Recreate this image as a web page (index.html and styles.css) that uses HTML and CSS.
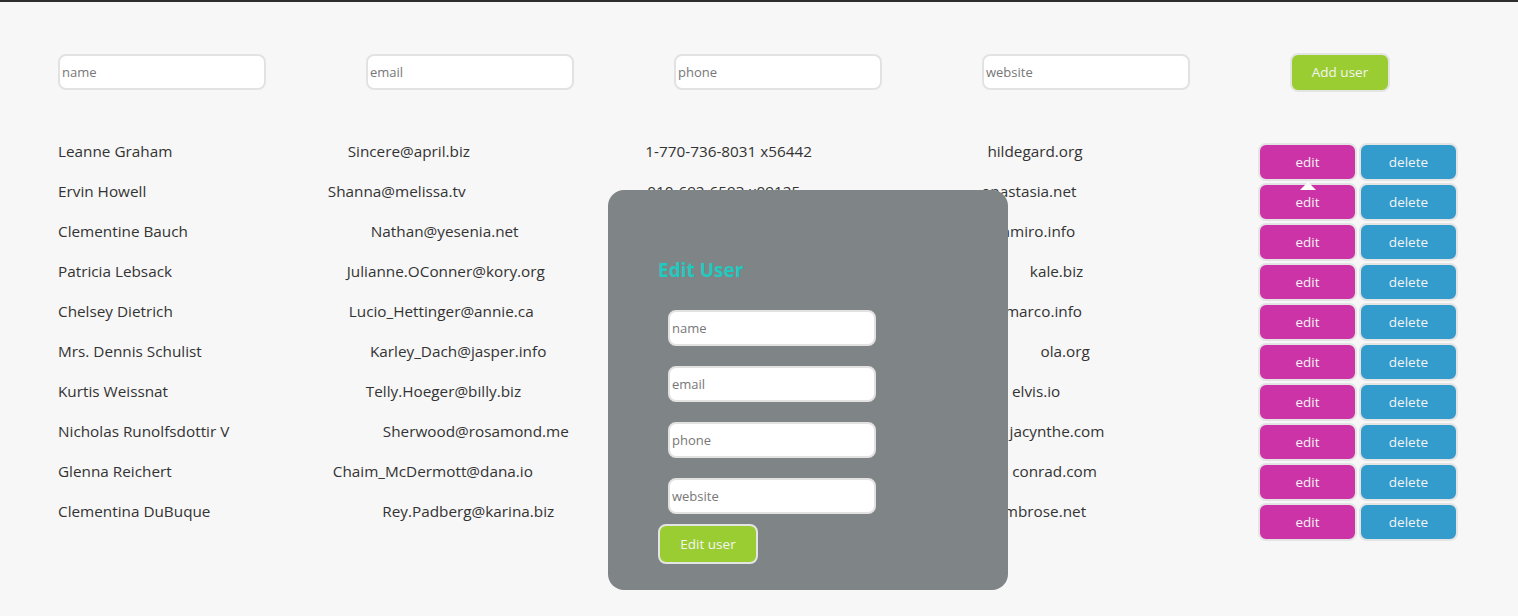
FILE: index.html
```html
<!DOCTYPE html>
<html lang="en">
<head>
<meta charset="utf-8">
<title>Users</title>
<link rel="stylesheet" href="styles.css">
</head>
<body>
<div class="page">
  <form class="add-form">
    <input class="field" type="text" placeholder="name">
    <input class="field" type="text" placeholder="email">
    <input class="field" type="text" placeholder="phone">
    <input class="field" type="text" placeholder="website">
    <button class="btn btn-green btn-add" type="button">Add user</button>
  </form>

  <div class="list">
    <div class="row"><span class="cell">Leanne Graham</span><span class="cell">Sincere@april.biz</span><span class="cell">1-770-736-8031 x56442</span><span class="cell">hildegard.org</span><div class="actions"><button class="btn btn-edit" type="button">edit</button><button class="btn btn-delete" type="button">delete</button></div></div>
    <div class="row"><span class="cell">Ervin Howell</span><span class="cell">Shanna@melissa.tv</span><span class="cell">010-692-6593 x09125</span><span class="cell">anastasia.net</span><div class="actions"><button class="btn btn-edit" type="button">edit</button><button class="btn btn-delete" type="button">delete</button></div></div>
    <div class="row"><span class="cell">Clementine Bauch</span><span class="cell">Nathan@yesenia.net</span><span class="cell">1-463-123-4447</span><span class="cell">ramiro.info</span><div class="actions"><button class="btn btn-edit" type="button">edit</button><button class="btn btn-delete" type="button">delete</button></div></div>
    <div class="row"><span class="cell">Patricia Lebsack</span><span class="cell">Julianne.OConner@kory.org</span><span class="cell">493-170-9623 x156</span><span class="cell">kale.biz</span><div class="actions"><button class="btn btn-edit" type="button">edit</button><button class="btn btn-delete" type="button">delete</button></div></div>
    <div class="row"><span class="cell">Chelsey Dietrich</span><span class="cell">Lucio_Hettinger@annie.ca</span><span class="cell">(254)954-1289</span><span class="cell">demarco.info</span><div class="actions"><button class="btn btn-edit" type="button">edit</button><button class="btn btn-delete" type="button">delete</button></div></div>
    <div class="row"><span class="cell">Mrs. Dennis Schulist</span><span class="cell">Karley_Dach@jasper.info</span><span class="cell">1-477-935-8478 x6430</span><span class="cell">ola.org</span><div class="actions"><button class="btn btn-edit" type="button">edit</button><button class="btn btn-delete" type="button">delete</button></div></div>
    <div class="row"><span class="cell">Kurtis Weissnat</span><span class="cell">Telly.Hoeger@billy.biz</span><span class="cell">210.067.6132</span><span class="cell">elvis.io</span><div class="actions"><button class="btn btn-edit" type="button">edit</button><button class="btn btn-delete" type="button">delete</button></div></div>
    <div class="row"><span class="cell">Nicholas Runolfsdottir V</span><span class="cell">Sherwood@rosamond.me</span><span class="cell">586.493.6943 x140</span><span class="cell">jacynthe.com</span><div class="actions"><button class="btn btn-edit" type="button">edit</button><button class="btn btn-delete" type="button">delete</button></div></div>
    <div class="row"><span class="cell">Glenna Reichert</span><span class="cell">Chaim_McDermott@dana.io</span><span class="cell">(775)976-6794 x41206</span><span class="cell">conrad.com</span><div class="actions"><button class="btn btn-edit" type="button">edit</button><button class="btn btn-delete" type="button">delete</button></div></div>
    <div class="row"><span class="cell">Clementina DuBuque</span><span class="cell">Rey.Padberg@karina.biz</span><span class="cell">024-648-3804</span><span class="cell">ambrose.net</span><div class="actions"><button class="btn btn-edit" type="button">edit</button><button class="btn btn-delete" type="button">delete</button></div></div>
  </div>
</div>

<span class="pointer"></span>

<div class="modal">
  <h2 class="modal-title">Edit User</h2>
  <div class="modal-fields">
    <input class="field" type="text" placeholder="name" autofocus>
    <input class="field" type="text" placeholder="email">
    <input class="field" type="text" placeholder="phone">
    <input class="field" type="text" placeholder="website">
  </div>
  <button class="btn btn-green btn-save" type="button">Edit user</button>
</div>
</body>
</html>
```

FILE: styles.css
```css
html, body {
  margin: 0;
  padding: 0;
}

body {
  background: #f7f7f7;
  border-top: 2px solid #2e2e2e;
  font-family: "Open Sans", "Noto Sans", sans-serif;
  color: #333333;
  min-height: 614px;
  position: relative;
}

.page {
  width: 1400px;
  margin-left: 58px;
}

.add-form {
  display: flex;
  align-items: center;
  gap: 100px;
  padding-top: 50px;
  height: 40px;
}

.field {
  box-sizing: border-box;
  width: 208px;
  height: 36px;
  border: 2px solid #e2e2e2;
  border-radius: 8px;
  background: #ffffff;
  padding: 0 2px;
  font-family: "Open Sans", "Noto Sans", sans-serif;
  font-size: 13px;
  color: #333;
  outline: none;
}

.field::placeholder {
  color: #777777;
}

.btn {
  box-sizing: border-box;
  border: 2px solid #e4e4e4;
  border-radius: 8px;
  color: #f4f4f4;
  font-family: "Open Sans", "Noto Sans", sans-serif;
  font-size: 13.5px;
  padding: 0;
  cursor: pointer;
}

.btn-green {
  background: #9acd32;
}

.btn-add {
  width: 100px;
  height: 39px;
}

.list {
  margin-top: 49px;
}

.row {
  display: flex;
  justify-content: space-between;
  align-items: flex-start;
  height: 40px;
}

.cell {
  font-size: 15.3px;
  line-height: 20px;
  white-space: nowrap;
}

.actions {
  display: flex;
  gap: 2px;
  margin-top: 2px;
}

.btn-edit,
.btn-delete {
  width: 99px;
  height: 38px;
}

.btn-edit {
  background: #cc33a6;
}

.btn-delete {
  background: #339ccc;
}

.pointer {
  position: absolute;
  left: 1300px;
  top: 180px;
  width: 0;
  height: 0;
  border-left: 8px solid transparent;
  border-right: 8px solid transparent;
  border-bottom: 8px solid #ffffff;
}

.modal {
  position: absolute;
  left: 608px;
  top: 188px;
  width: 400px;
  height: 400px;
  box-sizing: border-box;
  padding: 67px 50px 0 50px;
  background: #7f8486;
  border-radius: 16px;
}

.modal-title {
  margin: 0;
  font-size: 19px;
  line-height: 26px;
  font-weight: 700;
  color: #22c9bf;
}

.modal-fields {
  display: flex;
  flex-direction: column;
  gap: 20px;
  margin-top: 27px;
  padding-left: 10px;
}

.btn-save {
  margin-top: 10px;
  width: 100px;
  height: 40px;
}
```
